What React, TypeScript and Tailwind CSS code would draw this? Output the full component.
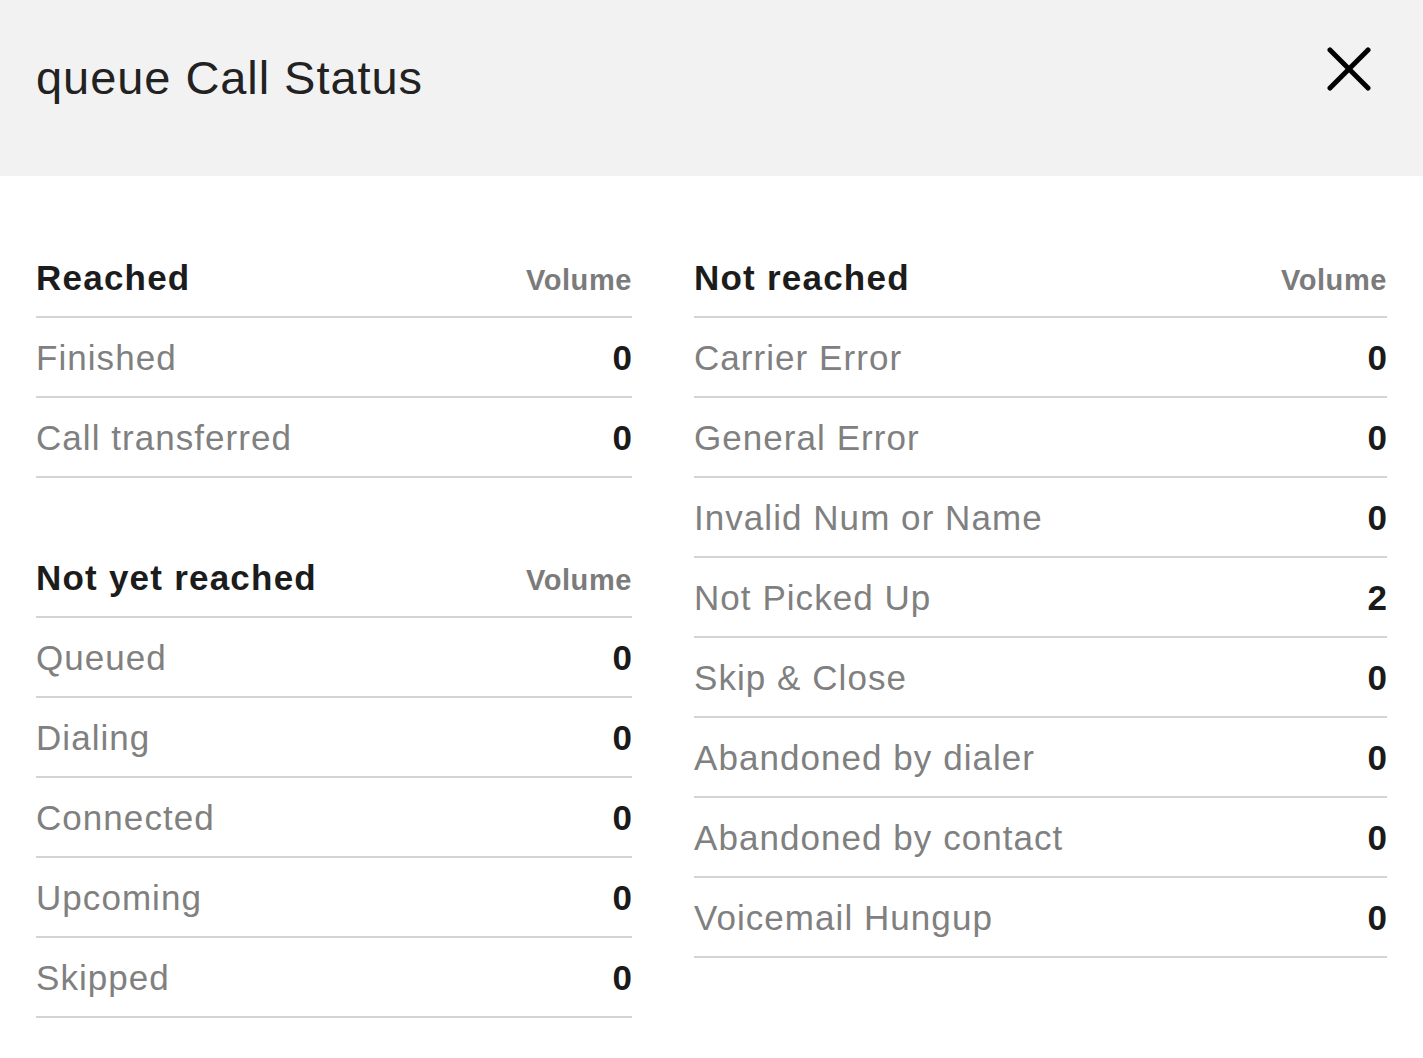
import React from "react";

type Row = { label: string; value: number };

const reached: Row[] = [
  { label: "Finished", value: 0 },
  { label: "Call transferred", value: 0 },
];

const notYetReached: Row[] = [
  { label: "Queued", value: 0 },
  { label: "Dialing", value: 0 },
  { label: "Connected", value: 0 },
  { label: "Upcoming", value: 0 },
  { label: "Skipped", value: 0 },
];

const notReached: Row[] = [
  { label: "Carrier Error", value: 0 },
  { label: "General Error", value: 0 },
  { label: "Invalid Num or Name", value: 0 },
  { label: "Not Picked Up", value: 2 },
  { label: "Skip & Close", value: 0 },
  { label: "Abandoned by dialer", value: 0 },
  { label: "Abandoned by contact", value: 0 },
  { label: "Voicemail Hungup", value: 0 },
];

const StatusTable = ({ title, rows }: { title: string; rows: Row[] }) => {
  return (
    <div className="w-full">
      <div className="h-20 flex items-baseline justify-between pt-[22px] border-b-2 border-[#d5d5d5]">
        <h2 className="text-[35px] leading-none font-bold tracking-[0.035em] text-[#1c1c1c]">{title}</h2>
        <span className="text-[29px] leading-none font-bold tracking-[0.02em] text-[#7b7b7b]">Volume</span>
      </div>
      {rows.map((r) => (
        <div
          key={r.label}
          className="h-20 flex items-center justify-between border-b-2 border-[#d5d5d5]"
        >
          <span className="text-[35px] leading-none tracking-[0.03em] text-[#808080]">{r.label}</span>
          <span className="text-[35px] leading-none font-bold text-[#1a1a1a]">{r.value}</span>
        </div>
      ))}
    </div>
  );
};

const App = () => {
  return (
    <div
      className="w-[1423px] min-h-[1058px] bg-white"
      style={{ fontFamily: '"Liberation Sans", Arial, sans-serif' }}
    >
      <header className="h-[176px] bg-[#f2f2f2] px-9 flex items-start justify-between">
        <h1 className="pt-[54px] text-[47px] leading-none tracking-[0.02em] text-[#222]">queue Call Status</h1>
        <button className="mt-[47px] mr-4 text-black" aria-label="close">
          <svg width="44" height="44" viewBox="0 0 44 44" fill="none" stroke="currentColor" strokeWidth="5" strokeLinecap="round">
            <line x1="3" y1="3" x2="41" y2="41" />
            <line x1="41" y1="3" x2="3" y2="41" />
          </svg>
        </button>
      </header>

      <div className="px-9 pt-[62px] pb-10 grid grid-cols-[596px_1fr] gap-x-[62px] items-start">
        <div className="flex flex-col gap-[60px]">
          <StatusTable title="Reached" rows={reached} />
          <StatusTable title="Not yet reached" rows={notYetReached} />
        </div>
        <StatusTable title="Not reached" rows={notReached} />
      </div>
    </div>
  );
};

export default App;
